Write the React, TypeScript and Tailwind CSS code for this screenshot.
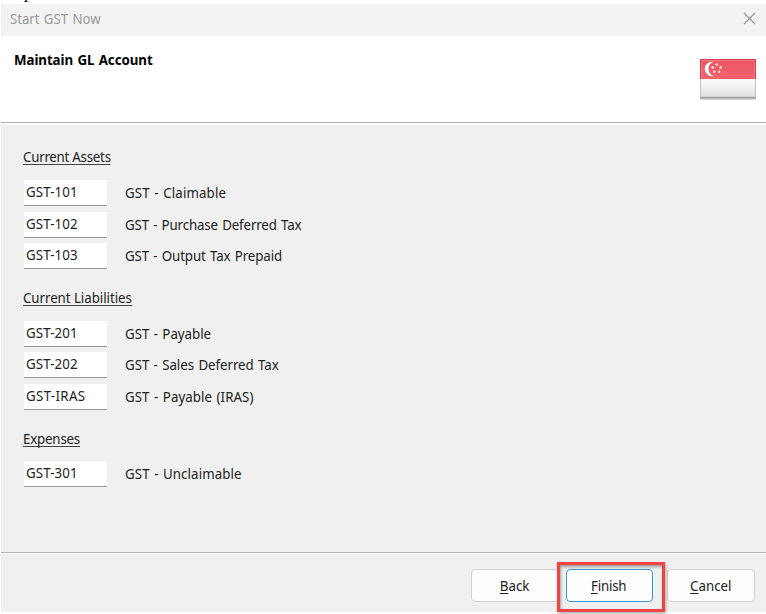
import React from 'react';

type Row = { code: string; name: string; gap: string; codeSpacing: string; spacing: string };

const assets: Row[] = [
  { code: 'GST-101', name: 'GST - Claimable', gap: 'mt-[14px]', codeSpacing: 'tracking-[0.12px]', spacing: 'tracking-[0.13px]' },
  { code: 'GST-102', name: 'GST - Purchase Deferred Tax', gap: 'mt-[6px]', codeSpacing: 'tracking-[0.12px]', spacing: 'tracking-[-0.15px]' },
  { code: 'GST-103', name: 'GST - Output Tax Prepaid', gap: 'mt-[5px]', codeSpacing: 'tracking-[0.12px]', spacing: 'tracking-[-0.12px]' },
];
const liabilities: Row[] = [
  { code: 'GST-201', name: 'GST - Payable', gap: 'mt-[14px]', codeSpacing: 'tracking-[0.12px]', spacing: 'tracking-[-0.02px]' },
  { code: 'GST-202', name: 'GST - Sales Deferred Tax', gap: 'mt-[5px]', codeSpacing: 'tracking-[0.12px]', spacing: 'tracking-[-0.05px]' },
  { code: 'GST-IRAS', name: 'GST - Payable (IRAS)', gap: 'mt-[6px]', codeSpacing: 'tracking-[0.35px]', spacing: 'tracking-[0.06px]' },
];
const expenses: Row[] = [
  { code: 'GST-301', name: 'GST - Unclaimable', gap: 'mt-[13px]', codeSpacing: 'tracking-[0.12px]', spacing: 'tracking-[0.09px]' },
];

function Section({ title, rows, className, spacing }: { title: string; rows: Row[]; className: string; spacing: string }) {
  return (
    <section className={className}>
      <h2 className="flex h-[18px]">
        <span className={`h-[17px] origin-left scale-x-95 border-b border-[#444] leading-[18px] ${spacing}`}>{title}</span>
      </h2>
      {rows.map((r) => (
        <div key={r.code} className={`flex h-[26px] ${r.gap}`}>
          <div className="ml-px h-[26px] w-[83px] whitespace-nowrap border-b border-[#999] bg-white pl-[2px] leading-[23px]">
            <span className={`inline-block origin-left scale-x-95 ${r.codeSpacing}`}>{r.code}</span>
          </div>
          <div className={`ml-[18px] origin-left scale-x-95 whitespace-nowrap leading-[26px] [word-spacing:1px] ${r.spacing}`}>{r.name}</div>
        </div>
      ))}
    </section>
  );
}

function Flag() {
  return (
    <svg width="58" height="42" viewBox="0 0 58 42">
      <defs>
        <linearGradient id="red" x1="0" y1="0" x2="0" y2="1">
          <stop offset="0" stopColor="#ec5462" />
          <stop offset="1" stopColor="#f2636f" />
        </linearGradient>
        <linearGradient id="white" x1="0" y1="0" x2="0" y2="1">
          <stop offset="0" stopColor="#fbfbfb" />
          <stop offset="0.6" stopColor="#f9f9f9" />
          <stop offset="1" stopColor="#dedede" />
        </linearGradient>
      </defs>
      <rect x="1" y="1.5" width="56" height="40" rx="1" fill="#b9b9b9" />
      <rect x="1" y="1" width="56" height="38.5" fill="url(#white)" />
      <rect x="1" y="1" width="56" height="20" fill="url(#red)" />
      <path d="M1.5 21V1.5H56.5V21" fill="none" stroke="#cf4653" />
      <path d="M1.5 21V39.5M56.5 21V39.5" stroke="#c4c4c4" />
      <path d="M1 39.5H57" stroke="#a5a5a5" strokeWidth="1.5" />
      <path d="M2.5 21V2.5H55.5V21" fill="none" stroke="#f57782" />
      <path d="M14.5 3.8A7.3 7.3 0 1 0 14.5 18.1A7.6 7.6 0 0 1 14.5 3.8Z" fill="#fff" />
      <g fill="#ffdce0">
        <circle cx="17.8" cy="6.5" r="1.3" />
        <circle cx="13.8" cy="9.4" r="1.3" />
        <circle cx="21.6" cy="9.4" r="1.3" />
        <circle cx="15.3" cy="13.8" r="1.3" />
        <circle cx="20.2" cy="13.8" r="1.3" />
      </g>
    </svg>
  );
}

export default function App() {
  return (
    <div className="flex h-[614px] w-[766px] flex-col overflow-hidden bg-white font-['Noto_Sans','Open_Sans',sans-serif] text-[14px] text-[#222]">
      <div className="relative h-[4px] shrink-0 overflow-hidden">
        <span className="absolute left-[24px] top-[-16px] font-['Liberation_Serif',serif] text-[16px] leading-[18px] text-black">p</span>
      </div>
      <header className="ml-px flex h-[32px] shrink-0 items-center justify-between bg-[#f3f3f3] pl-[9px] pr-[10px] text-[#999]">
        <span className="mb-[3px] origin-left scale-x-95 tracking-[-0.07px] [word-spacing:1px]">Start GST Now</span>
        <svg width="13" height="13" viewBox="0 0 13 13" className="mb-[3px]">
          <path d="M1 1L12 12M12 1L1 12" stroke="#929292" strokeWidth="1.1" />
        </svg>
      </header>
      <div className="flex h-[86px] shrink-0 justify-between pl-[14px] pr-[9px]">
        <h1 className="mt-[15px] origin-left scale-x-95 self-start text-[14px] font-bold leading-[18px] tracking-[-0.06px] text-black [word-spacing:1px]">Maintain GL Account</h1>
        <div className="mt-[22px]"><Flag /></div>
      </div>
      <div className="ml-px h-[3px] shrink-0 border-t border-[#b2b2b2] bg-white" />
      <main className="ml-px h-[427px] shrink-0 bg-[#f0f0f0] pl-[22px]">
        <Section title="Current Assets" rows={assets} className="pt-[23px]" spacing="tracking-[-0.26px]" />
        <Section title="Current Liabilities" rows={liabilities} className="mt-[20px]" spacing="tracking-[-0.05px]" />
        <Section title="Expenses" rows={expenses} className="mt-[20px]" spacing="tracking-[-0.2px]" />
      </main>
      <div className="ml-px h-[2px] shrink-0 border-t border-[#b2b2b2] bg-white" />
      <footer className="relative ml-px flex h-[58px] shrink-0 bg-[#f0f0f0] pl-[470px] pt-[15px]">
        <button className="h-[33px] w-[88px] rounded-[4px] border border-[#d2d2d2] bg-[#fdfdfd]"><span className="inline-block scale-x-95"><u className="underline-offset-2">B</u>ack</span></button>
        <button className="ml-[7px] h-[33px] w-[87px] rounded-[4px] border-[1.5px] border-[#3f94d5] bg-[#fdfdfd] pr-[2px]"><span className="inline-block scale-x-95 tracking-[-0.2px]"><u className="underline-offset-2">F</u>inish</span></button>
        <button className="ml-[14px] h-[33px] w-[88px] rounded-[4px] border border-[#d2d2d2] bg-[#fdfdfd]"><span className="inline-block scale-x-95"><u className="underline-offset-2">C</u>ancel</span></button>
        <div className="pointer-events-none absolute left-[556px] top-[8px] h-[50px] w-[108px] border-[3px] border-[#f04343] shadow-[inset_1px_2px_3px_rgba(0,0,0,0.35),1px_2px_3px_rgba(0,0,0,0.3)]" />
      </footer>
    </div>
  );
}
